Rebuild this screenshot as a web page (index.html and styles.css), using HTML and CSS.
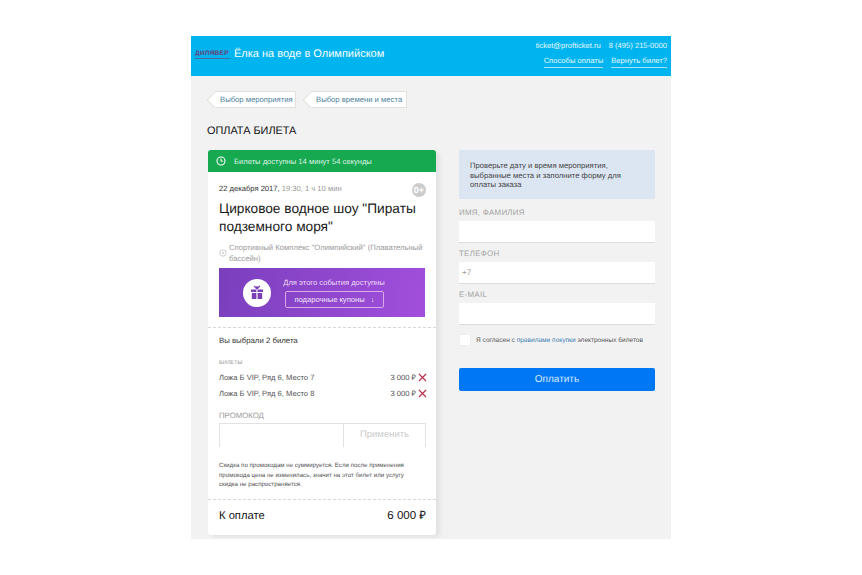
FILE: index.html
```html
<!DOCTYPE html>
<html lang="ru">
<head>
	<meta charset="utf-8">
	<title>Оплата билета</title>
	<link rel="stylesheet" href="styles.css">
</head>
<body>
<div class="page">
	<div class="header">
		<div class="logo">
			<div class="logo-name">ДИЛЯВЕР</div>
			<div class="logo-line"></div>
		</div>
		<div class="header-title">Ёлка на воде в Олимпийском</div>
		<div class="header-links">
			<div class="header-row"><span>ticket@profticket.ru</span><span>8 (495) 215-0000</span></div>
			<div class="header-row"><a href="#">Способы оплаты</a><a href="#">Вернуть билет?</a></div>
		</div>
	</div>
	<div class="main">
		<div class="crumbs">
			<a class="crumb crumb-first" href="#"><span>Выбор мероприятия</span></a>
			<a class="crumb crumb-second" href="#"><span>Выбор времени и места</span></a>
		</div>
		<h1 class="page-title">ОПЛАТА БИЛЕТА</h1>
		<div class="columns">
			<div class="card">
				<div class="timer">
					<svg class="timer-icon" width="10" height="10" viewBox="0 0 10 10"><circle cx="5" cy="5" r="4" fill="none" stroke="#fff" stroke-width="1.1"/><path d="M5 2.6V5.2H7" fill="none" stroke="#fff" stroke-width="1"/></svg>
					Билеты доступны 14 минут 54 секунды
				</div>
				<div class="event">
					<div class="event-date"><span class="dark">22 декабря 2017,</span> 19:30, 1 ч 10 мин<span class="age">0+</span></div>
					<div class="event-name">Цирковое водное шоу "Пираты подземного моря"</div>
					<div class="event-place">
						<svg class="place-icon" width="8" height="8" viewBox="0 0 8 8"><circle cx="4" cy="4" r="3.2" fill="none" stroke="#ccc"/><circle cx="4" cy="4" r="1" fill="#ccc"/></svg>
						<span>Спортивный Комплекс "Олимпийский" (Плавательный бассейн)</span>
					</div>
					<div class="promo">
						<div class="promo-circle">
							<svg width="14" height="15" viewBox="0 0 14 15"><path fill="#7d3fb5" d="M1 4.5h5.4v2.4H1zM7.6 4.5H13v2.4H7.6zM1.8 7.9h4.6V14H1.8zM7.6 7.9h4.6V14H7.6z"/><path fill="none" stroke="#7d3fb5" stroke-width="1.2" d="M7 4L4.2 1M7 4l2.8-3M7 4V1"/></svg>
						</div>
						<div class="promo-text">
							<div>Для этого события доступны</div>
							<div class="promo-button">подарочные купоны <span class="promo-arrow">↓</span></div>
						</div>
					</div>
				</div>
				<div class="order">
					<div class="order-count">Вы выбрали 2 билета</div>
					<div class="small-label">БИЛЕТЫ</div>
					<div class="ticket"><span>Ложа Б VIP, Ряд 6, Место 7</span><span class="price">3 000 ₽<svg class="remove" width="9" height="9" viewBox="0 0 9 9"><path d="M1 1l7 7M8 1L1 8" stroke="#b8324a" stroke-width="1.2"/></svg></span></div>
					<div class="ticket"><span>Ложа Б VIP, Ряд 6, Место 8</span><span class="price">3 000 ₽<svg class="remove" width="9" height="9" viewBox="0 0 9 9"><path d="M1 1l7 7M8 1L1 8" stroke="#b8324a" stroke-width="1.2"/></svg></span></div>
					<div class="promo-label">ПРОМОКОД</div>
					<div class="promo-code">
						<div class="promo-input"></div>
						<div class="promo-apply">Применить</div>
					</div>
					<div class="note">Скидка по промокодам не суммируется. Если после применения промокода цена не изменилась, значит на этот билет или услугу скидка не распространяется.</div>
				</div>
				<div class="total"><span>К оплате</span><span class="total-sum">6 000 ₽</span></div>
			</div>
			<div class="form">
				<div class="hint">Проверьте дату и время мероприятия, выбранные места и заполните форму для оплаты заказа</div>
				<div class="field-label">ИМЯ, ФАМИЛИЯ</div>
				<div class="field"></div>
				<div class="field-label">ТЕЛЕФОН</div>
				<div class="field">+7</div>
				<div class="field-label">E-MAIL</div>
				<div class="field"></div>
				<div class="agree">
					<div class="checkbox"></div>
					<div>Я согласен с <a href="#">правилами покупки</a> электронных билетов</div>
				</div>
				<div class="pay">Оплатить</div>
			</div>
		</div>
	</div>
</div>
</body>
</html>
```
FILE: styles.css
```css
body{
	margin: 0;
	background: #fff;
	font-family: "Liberation Sans", Arial, sans-serif;
	color: #222;
	text-rendering: geometricPrecision;
}
a{
	color: inherit;
	text-decoration: none;
}
.page{
	width: 480px;
	height: 503px;
	margin: 36px auto 0;
	background: #f2f2f2;
	overflow: hidden;
}
.header{
	height: 40px;
	background: #00b4f0;
	color: #fff;
	display: flex;
	align-items: center;
	padding: 0 4px 0 4px;
}
.logo{
	width: 35px;
	margin-right: 4px;
	margin-top: -4px;
}
.logo-name{
	font-size: 6.6px;
	font-weight: bold;
	color: #6b3f78;
	line-height: 7px;
	letter-spacing: 0.2px;
	white-space: nowrap;
}
.logo-line{
	height: 1px;
	margin-top: 1px;
	background: #4a6aa0;
}
.header-title{
	font-size: 11px;
	flex: 1;
	margin-top: -4px;
}
.header-links{
	font-size: 7.6px;
	align-self: flex-start;
	padding-top: 5px;
	color: #e8f8fe;
}
.header-row{
	display: flex;
	justify-content: flex-end;
	gap: 8px;
	height: 15px;
	line-height: 10px;
}
.header-row a{
	border-bottom: 1px solid #a5e2f8;
	height: 11px;
}
.main{
	padding: 15px 16px 0 17px;
}
.crumbs{
	display: flex;
	gap: 8px;
}
.crumb{
	position: relative;
	height: 17px;
	line-height: 16px;
	background: #fff;
	border: 1px solid #e4e0da;
	border-left: none;
	box-sizing: border-box;
	font-size: 7.7px;
	color: #4d7f9c;
	padding-left: 5px;
	margin-left: 7px;
	white-space: nowrap;
}
.crumb::before{
	content: "";
	position: absolute;
	left: -6px;
	top: 2px;
	width: 11px;
	height: 11px;
	background: #fff;
	border-left: 1px solid #e4e0da;
	border-bottom: 1px solid #e4e0da;
	transform: rotate(45deg);
}
.crumb span{
	position: relative;
}
.crumb-first{
	width: 81px;
}
.crumb-second{
	width: 96px;
}
.page-title{
	font-size: 10.9px;
	font-weight: normal;
	color: #111;
	margin: 17px 0 0 -1px;
	height: 25px;
	line-height: 12px;
}
.columns{
	display: flex;
	align-items: flex-start;
	gap: 23px;
}
.card{
	width: 228px;
	height: 385px;
	background: #fff;
	border-radius: 3px;
	box-shadow: 4px 2px 4px #e2e2e2;
	display: flex;
	flex-direction: column;
}
.timer{
	height: 22px;
	background: #16a950;
	border-radius: 3px 3px 0 0;
	color: #dff3e6;
	font-size: 7.6px;
	display: flex;
	align-items: center;
	padding-left: 8px;
	gap: 8px;
}
.event{
	padding: 11px 11px 0;
	height: 156px;
	box-sizing: border-box;
	border-bottom: 1px dashed #d8d8d8;
}
.event-date{
	font-size: 7.6px;
	color: #999;
	line-height: 11px;
	position: relative;
}
.dark{
	color: #333;
}
.age{
	position: absolute;
	right: -1px;
	top: 0;
	width: 14px;
	height: 14px;
	border-radius: 7px;
	background: #ccc;
	color: #fff;
	font-size: 9px;
	font-weight: bold;
	line-height: 14px;
	text-align: center;
}
.event-name{
	font-size: 13.7px;
	line-height: 18px;
	color: #1a1a1a;
	margin-top: 6px;
}
.event-place{
	display: flex;
	align-items: center;
	gap: 2px;
	font-size: 7.7px;
	line-height: 11px;
	color: #999;
	margin-top: 6px;
}
.place-icon{
	flex: none;
}
.promo{
	height: 49px;
	margin-top: 4px;
	background: linear-gradient(100deg, #7a3fbd, #a24fdc);
	display: flex;
	align-items: center;
	color: #f0dcfa;
	font-size: 7.6px;
	padding-left: 24px;
	gap: 12px;
}
.promo-circle{
	width: 28px;
	height: 28px;
	border-radius: 14px;
	background: #fff;
	display: flex;
	align-items: center;
	justify-content: center;
}
.promo-text{
	width: 102px;
	text-align: center;
	line-height: 10px;
	white-space: nowrap;
}
.promo-button{
	height: 17px;
	line-height: 16px;
	border: 1px solid #d9a8ee;
	border-radius: 2px;
	box-sizing: border-box;
	margin: 3px 0 0 2px;
	width: 99px;
	color: #f5e6fb;
}
.promo-arrow{
	margin-left: 4px;
}
.order{
	padding: 7px 9px 0 11px;
	flex: 1;
	border-bottom: 1px dashed #d8d8d8;
}
.order-count{
	font-size: 7.8px;
	color: #333;
	line-height: 11px;
}
.small-label{
	font-size: 5.6px;
	color: #999;
	margin-top: 13px;
	line-height: 8px;
}
.ticket{
	display: flex;
	justify-content: space-between;
	font-size: 7.6px;
	color: #555;
	line-height: 15px;
	height: 15px;
	margin-top: 1px;
}
.small-label + .ticket{
	margin-top: 3px;
}
.price{
	display: flex;
	align-items: center;
	gap: 2px;
}
.promo-label{
	font-size: 7.8px;
	color: #999;
	margin-top: 10px;
	line-height: 10px;
}
.promo-code{
	display: flex;
	height: 23px;
	margin-top: 2px;
	margin-right: 1px;
	border: 1px solid #e2e2e2;
	border-bottom: none;
}
.promo-input{
	width: 123px;
	border-right: 1px solid #e2e2e2;
}
.promo-apply{
	flex: 1;
	text-align: center;
	font-size: 9.5px;
	line-height: 22px;
	color: #ccc;
}
.note{
	font-size: 6.15px;
	line-height: 9.5px;
	color: #555;
	margin: 14px 8px 0 0;
}
.total{
	height: 35px;
	flex: none;
	padding: 0 10px 4px 11px;
	box-sizing: border-box;
	display: flex;
	align-items: center;
	justify-content: space-between;
	font-size: 11.2px;
	color: #111;
}
.total-sum{
	font-size: 11.5px;
}
.form{
	width: 196px;
}
.hint{
	height: 49px;
	box-sizing: border-box;
	padding: 11px 11px 0;
	background: #dce6f3;
	border-radius: 1px;
	font-size: 7.7px;
	line-height: 9.5px;
	color: #444;
}
.field-label{
	font-size: 7.9px;
	color: #a3a3a3;
	line-height: 10px;
	margin-top: 9px;
	letter-spacing: 0.3px;
}
.field{
	height: 21px;
	margin-top: 3px;
	background: #fff;
	border-bottom: 1px solid #ddd;
	font-size: 8px;
	line-height: 21px;
	color: #999;
	padding-left: 3px;
}
.field + .field-label{
	margin-top: 6px;
}
.agree{
	display: flex;
	align-items: center;
	gap: 5px;
	margin-top: 9px;
	font-size: 6.55px;
	color: #555;
	white-space: nowrap;
}
.agree a{
	color: #3d7fb0;
}
.checkbox{
	width: 10px;
	height: 10px;
	background: #fff;
	border-radius: 1px;
	border: 1px solid #eee;
}
.pay{
	height: 23px;
	margin-top: 22px;
	background: #0077f5;
	border-radius: 2px;
	color: #dcebfc;
	font-size: 10px;
	line-height: 23px;
	text-align: center;
}
```
